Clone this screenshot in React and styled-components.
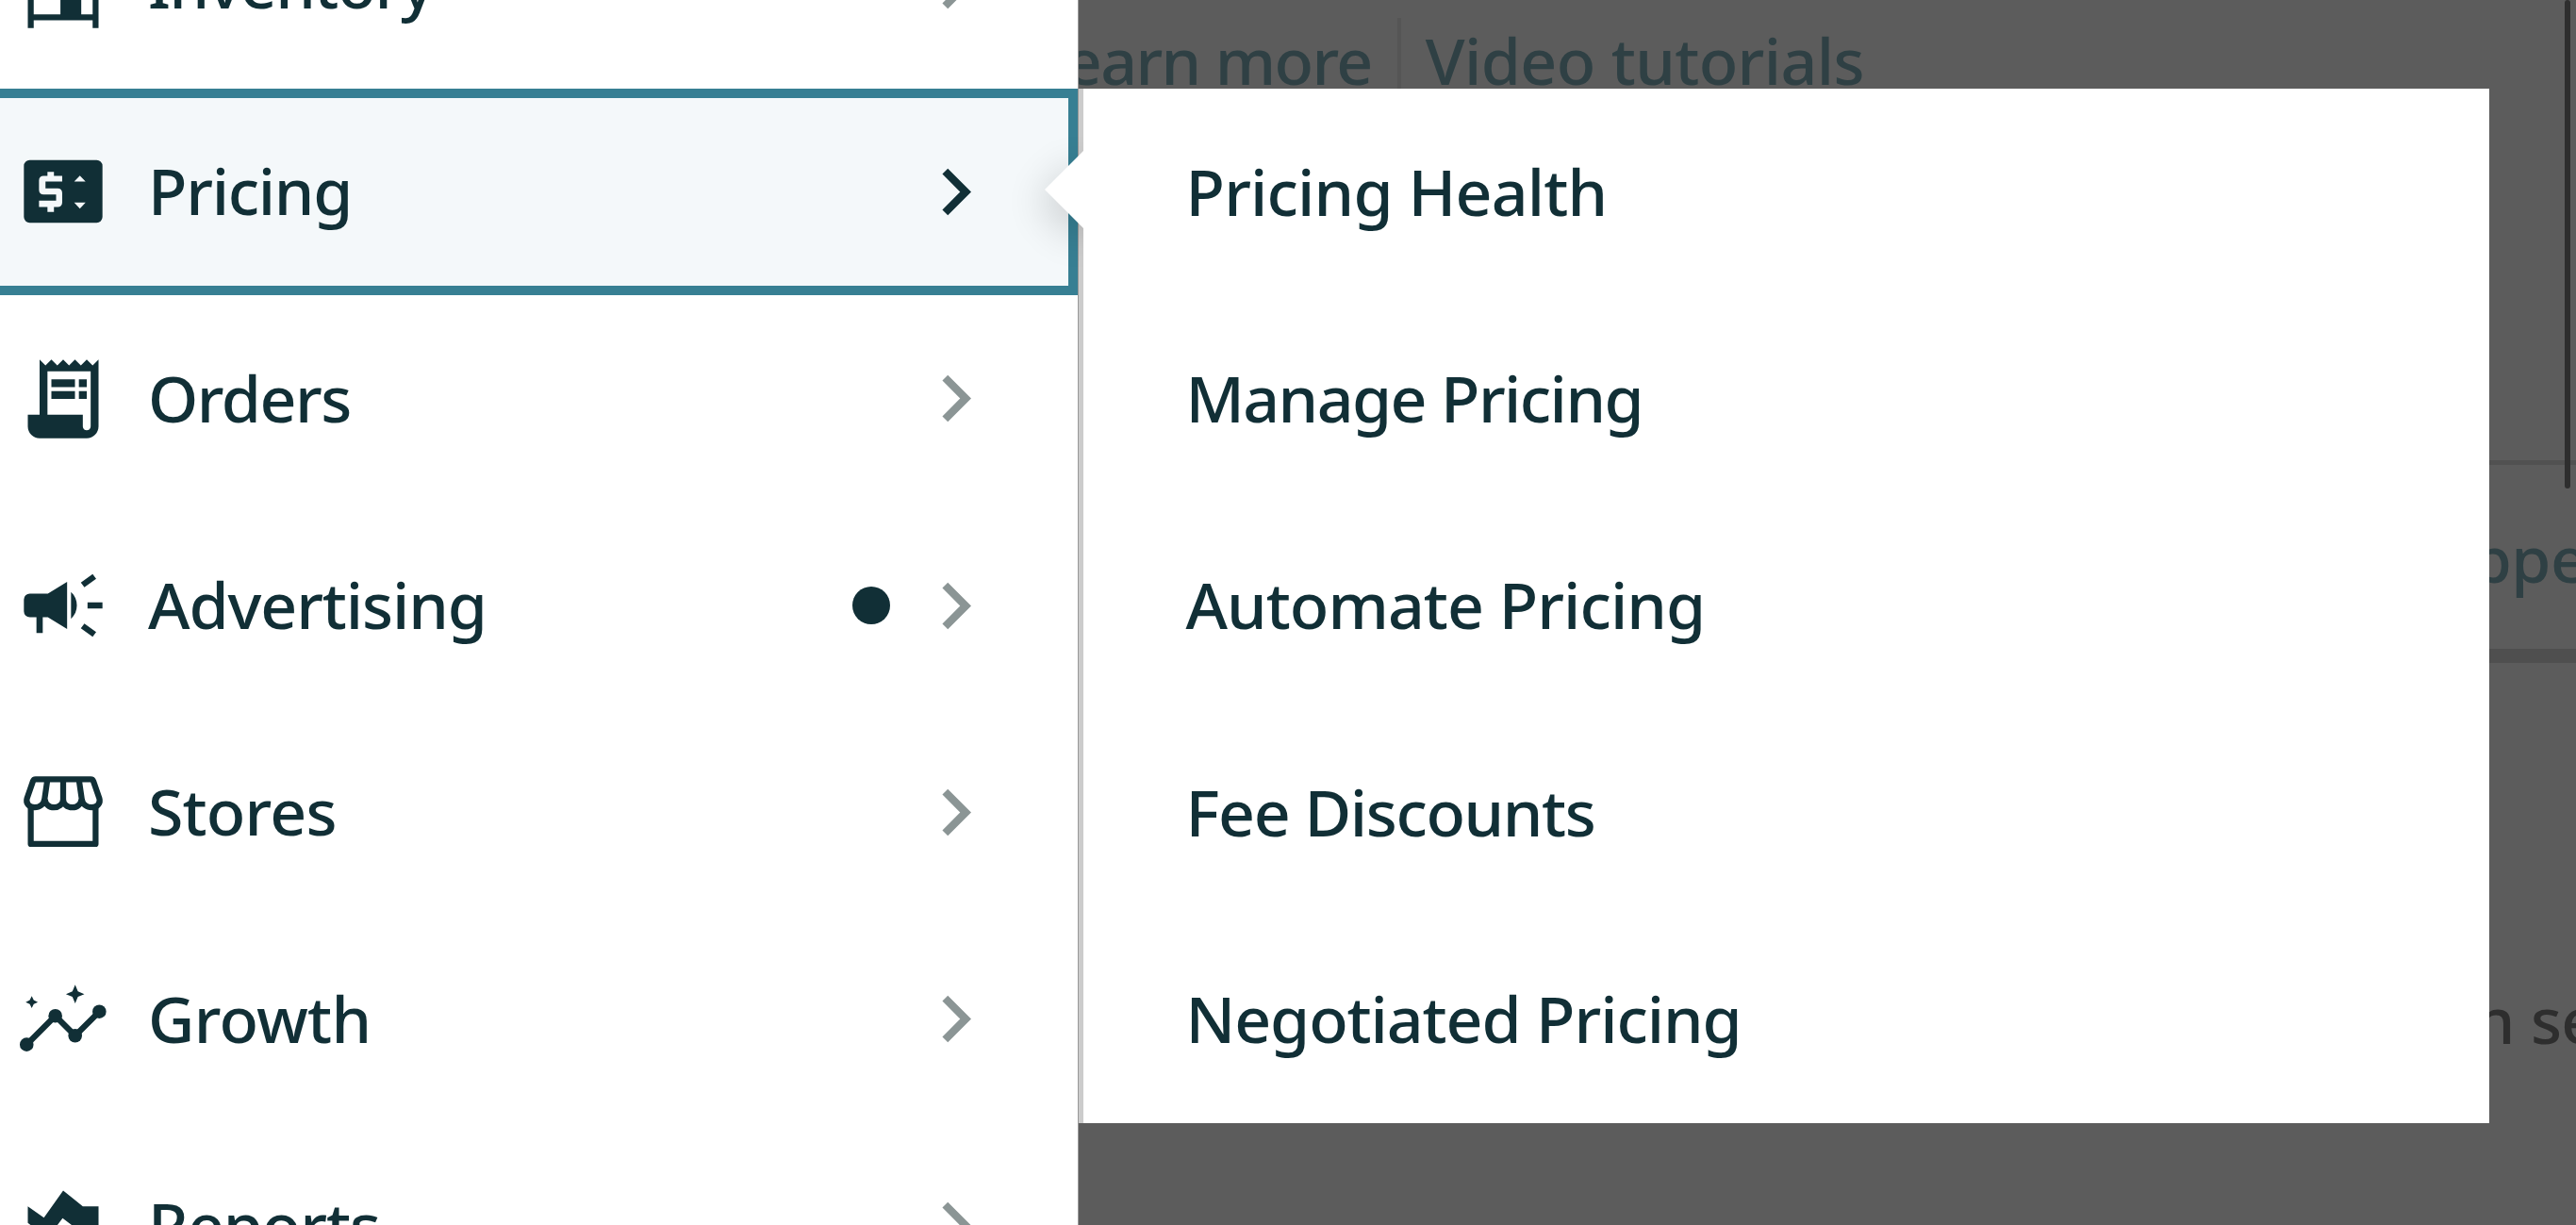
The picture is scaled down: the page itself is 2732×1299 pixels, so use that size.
import * as React from "react";
import styled, { createGlobalStyle } from "styled-components";

const ink = "#112f36";

const menuItems = [
  { label: "Inventory", icon: "inventory", tracking: -1.6 },
  { label: "Pricing", icon: "pricing", tracking: -1.3, active: true },
  { label: "Orders", icon: "orders", tracking: -1.5 },
  { label: "Advertising", icon: "advertising", tracking: -1.1, dot: true },
  { label: "Stores", icon: "stores", tracking: -0.8 },
  { label: "Growth", icon: "growth", tracking: -0.7 },
  { label: "Reports", icon: "reports", tracking: -1.1 },
];

const flyoutItems = [
  { label: "Pricing Health", tracking: -0.85 },
  { label: "Manage Pricing", tracking: -1.6 },
  { label: "Automate Pricing", tracking: -0.95 },
  { label: "Fee Discounts", tracking: -1.4 },
  { label: "Negotiated Pricing", tracking: -1.1 },
];

const icons = {
  inventory: (
    <path
      fillRule="evenodd"
      d="M3 23V7l9-4 9 4v16h-1.5v-2h-15v2zM4.5 19.5h6.8V12h5.3v7.5h2.9V8L12 4.6 4.5 8z"
    />
  ),
  pricing: (
    <path
      fillRule="evenodd"
      d="M3.5 4h17A1.5 1.5 0 0 1 22 5.5v13a1.5 1.5 0 0 1-1.5 1.5h-17A1.5 1.5 0 0 1 2 18.5v-13A1.5 1.5 0 0 1 3.5 4zM8 7v1.05H7c-.7 0-1.15.45-1.15 1.15v2.45c0 .7.45 1.15 1.15 1.15h3.2v1.55H5.85v1.6H8v1.25h1.65v-1.25h.95c.7 0 1.15-.45 1.15-1.15v-2.45c0-.7-.45-1.15-1.15-1.15H7.5V9.5h4.25V8.05h-2.1V7zM14.8 9.5h2.9l-1.45-1.5zM14.8 14.8h2.9l-1.45 1.55z"
    />
  ),
  orders: (
    <>
      <path d="M19.5 3.5 18 2l-1.5 1.5L15 2l-1.5 1.5L12 2l-1.5 1.5L9 2 7.5 3.5 6 2v14H3v3c0 1.66 1.34 3 3 3h12c1.66 0 3-1.34 3-3V2zM19 19c0 .55-.45 1-1 1s-1-.45-1-1v-3H8V5h11z" />
      <path d="M9 7h6v2H9zM16 7h2v2h-2zM9 10h6v2H9zM16 10h2v2h-2z" />
    </>
  ),
  advertising: (
    <>
      <path d="M3.5 9h4.6L13 6v12l-4.9-3H6.8v4H5.2v-4H3.5A1.5 1.5 0 0 1 2 13.5v-3A1.5 1.5 0 0 1 3.5 9z" />
      <path d="M14 8.6c2 1.7 2 5.1 0 6.8zM18.2 11.2H22v1.6h-3.8zM16.5 6.2l3-2.2.9 1.2-3 2.2zM17.4 16.6l3 2.2-.9 1.2-3-2.2z" />
    </>
  ),
  stores: (
    <g fill="none" stroke={ink} strokeWidth="1.5" strokeLinejoin="round">
      <path d="M5 3.7h14c.4 0 .6.2.7.5l1.5 4.3c.4 1.3-.5 2.35-1.9 2.35-1.35 0-2.35-.85-2.55-2L16 3.7M5 3.7c-.4 0-.6.2-.7.5L2.8 8.5c-.4 1.3.5 2.35 1.9 2.35 1.35 0 2.35-.85 2.55-2L8 3.7M7.35 8.8c.1 1.2 1.1 2.05 2.3 2.05S12 10 12 8.8V3.7M12 8.8c0 1.2 1.05 2.05 2.35 2.05 1.2 0 2.2-.85 2.3-2.05" />
      <path d="M3.75 10.4v9.75h16.5V10.4" />
    </g>
  ),
  growth: (
    <>
      <path
        d="M2.7 18.4 10 11.1l5.05 5.05L21.2 10"
        fill="none"
        stroke={ink}
        strokeWidth="1.5"
      />
      <circle cx="2.7" cy="18.4" r="1.75" />
      <circle cx="10" cy="11.1" r="1.75" />
      <circle cx="15.05" cy="16.15" r="1.75" />
      <circle cx="21.2" cy="10" r="1.75" />
      <path d="M15.05 3.2l.7 1.65 1.65.7-1.65.7-.7 1.65-.7-1.65-1.65-.7 1.65-.7zM4 6.05l.5 1.05 1.05.5-1.05.5L4 9.15 3.5 8.1 2.45 7.6 3.5 7.1z" />
    </>
  ),
  reports: (
    <path d="M3 7l4.1 2.9L12 3l5 4h4v10l-9.15-7L8 15.2l-5-4zM3 13.5l5.3 4.2L12.3 12 21 19v2H3z" />
  ),
};

const App = () => {
  return (
    <Screen>
      <GlobalStyle />
      <DimmedPage>
        <LinkBar>
          <PageLink $tracking={-1.6}>Learn more</PageLink>
          <LinkDivider />
          <PageLink $tracking={-0.6}>Video tutorials</PageLink>
        </LinkBar>
        <TabBar>
          <TabLabel>Shopper</TabLabel>
        </TabBar>
        <PageNote>in seller</PageNote>
        <ScrollThumb />
      </DimmedPage>
      <Drawer>
        <Menu>
          {menuItems.map((item) => (
            <MenuRow key={item.label} $active={item.active}>
              <MenuIcon viewBox="0 0 24 24">{icons[item.icon]}</MenuIcon>
              <MenuLabel $tracking={item.tracking}>{item.label}</MenuLabel>
              {item.dot && <NoticeDot />}
              <Chevron viewBox="0 0 24 24" $active={item.active}>
                <path d="M8.59 16.59 13.17 12 8.59 7.41 10 6l6 6-6 6z" />
              </Chevron>
            </MenuRow>
          ))}
        </Menu>
        <Flyout>
          <PointerClip>
            <Pointer />
          </PointerClip>
          {flyoutItems.map((item) => (
            <FlyoutRow key={item.label} $tracking={item.tracking}>
              {item.label}
            </FlyoutRow>
          ))}
        </Flyout>
      </Drawer>
    </Screen>
  );
};

const GlobalStyle = createGlobalStyle`
  body {
    margin: 0;
    overflow: hidden;
  }

  * {
    box-sizing: border-box;
  }
`;

const Screen = styled.div`
  display: grid;
  grid-template: 1299px / 2732px;
  overflow: hidden;
  background-color: #5c5c5c;
  color: ${ink};
  font-family: "Noto Sans", "Open Sans", sans-serif;
  font-size: 68px;
  font-weight: 500;
  line-height: 92px;
  letter-spacing: -0.6px;
  white-space: nowrap;
`;

const DimmedPage = styled.main`
  grid-area: 1 / 1;
  position: relative;
  display: flex;
  flex-direction: column;
`;

const LinkBar = styled.nav`
  display: flex;
  align-items: flex-start;
  height: 488px;
  padding: 18px 0 0 1095px;
`;

const PageLink = styled.a`
  color: #2f4044;
  letter-spacing: ${(props) => props.$tracking}px;
`;

const LinkDivider = styled.span`
  width: 4px;
  height: 92px;
  margin: 1px 26px 0 27px;
  background-color: #555555;
`;

const TabBar = styled.div`
  display: flex;
  justify-content: flex-end;
  height: 215px;
  padding-top: 53px;
  border-top: 5px solid #515151;
  border-bottom: 15px solid #4f4f4f;
`;

const TabLabel = styled.span`
  width: 230px;
  color: #2f4044;
`;

const PageNote = styled.p`
  align-self: flex-end;
  width: 125px;
  margin: 332px 0 0;
  color: #2e2e2e;
`;

const ScrollThumb = styled.div`
  position: absolute;
  top: 0;
  right: 6px;
  width: 6px;
  height: 518px;
  border-radius: 3px;
  background-color: #2e2e2e;
`;

const Drawer = styled.div`
  grid-area: 1 / 1;
  z-index: 1;
  display: flex;
  align-items: flex-start;
  height: 1299px;
  overflow: hidden;
`;

const Menu = styled.ul`
  flex: none;
  width: 1144px;
  margin: -125.5px 0 0;
  padding: 0;
  border-right: 1px solid #999999;
  background-color: #ffffff;
  list-style: none;
`;

const MenuRow = styled.li`
  display: flex;
  align-items: center;
  height: 219.3px;
  padding: 0 80px 0 17px;
  background-color: ${(props) => (props.$active ? "#f4f8fa" : "#ffffff")};
  box-shadow: ${(props) =>
    props.$active
      ? "inset 0 10px #377f93, inset 0 -10px #377f93, inset -10px 0 #377f93"
      : "none"};
`;

const MenuIcon = styled.svg`
  flex: none;
  width: 100px;
  height: 100px;
  fill: ${ink};
`;

const MenuLabel = styled.span`
  flex: 1;
  margin-left: 40px;
  padding-bottom: 2px;
  letter-spacing: ${(props) => props.$tracking}px;
`;

const NoticeDot = styled.span`
  width: 40px;
  height: 40px;
  margin-right: 20px;
  border-radius: 50%;
  background-color: ${ink};
`;

const Chevron = styled.svg`
  flex: none;
  width: 99px;
  height: 99px;
  fill: ${(props) => (props.$active ? ink : "#8b9595")};
`;

const Flyout = styled.section`
  position: relative;
  width: 1496px;
  height: 1097px;
  margin-top: 94px;
  padding-left: 108.5px;
  border-left: 5px solid #cccccc;
  background-color: #ffffff;
`;

/* keeps the pointer's shadow off the panel itself */
const PointerClip = styled.div`
  position: absolute;
  top: 10px;
  left: -115px;
  width: 115px;
  height: 199px;
  overflow: hidden;
`;

const Pointer = styled.div`
  width: 58px;
  height: 58px;
  margin: 68px 0 0 86px;
  background-color: #ffffff;
  box-shadow: 4px 14px 42px rgba(0, 0, 0, 0.16);
  transform: rotate(45deg);
`;

const FlyoutRow = styled.div`
  display: flex;
  align-items: center;
  height: 219.3px;
  padding-bottom: 2px;
  letter-spacing: ${(props) => props.$tracking}px;
`;

export default App;
